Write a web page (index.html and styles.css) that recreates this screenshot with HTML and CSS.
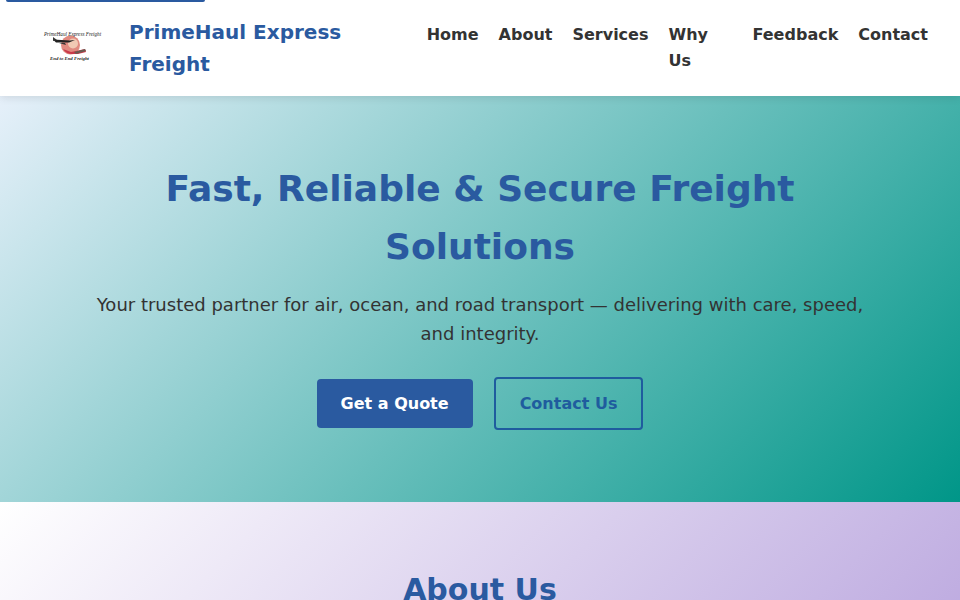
FILE: index.html
```html
<!DOCTYPE html>
<html lang="en">
<head>
<meta charset="utf-8">
<title>PrimeHaul Express Freight</title>
<link rel="stylesheet" href="styles.css">
</head>
<body>
<a class="skip-link" href="#main" aria-label="Skip to content"></a>
<header class="site-header">
  <div class="brand">
    <svg class="logo" viewBox="0 0 70 46" width="70" height="46" aria-hidden="true">
      <circle cx="33.500" cy="20" r="9.500" fill="#e08a80"/>
      <circle cx="36" cy="18.500" r="5" fill="#f1c9b4"/>
      <path d="M26 24q3 5 9 5l6 0 8-2-1-3-9 2-5 1z" fill="#c9394a"/>
      <path d="M37 27l11-3 1 2-10 3z" fill="#6b5a50"/>
      <path d="M16 14.500l17 1 5-.5-6 2.500-13 0z" fill="#222"/>
      <path d="M16 12l4 3-4 1z" fill="#333"/>
      <path d="M22 18l6 0 1 2z" fill="#333"/>
      <text class="logo-text" x="35.500" y="10.500" text-anchor="middle">PrimeHaul Express Freight</text>
      <text class="logo-text logo-sub" x="32.500" y="35" text-anchor="middle">End to End Freight</text>
    </svg>
    <span class="brand-name">PrimeHaul Express Freight</span>
  </div>
  <nav class="nav">
    <a href="#">Home</a>
    <a href="#">About</a>
    <a href="#">Services</a>
    <a class="nav-wrap" href="#">Why Us</a>
    <a href="#">Feedback</a>
    <a href="#">Contact</a>
  </nav>
</header>
<main id="main">
  <section class="hero">
    <h1>Fast, Reliable &amp; Secure Freight Solutions</h1>
    <p>Your trusted partner for air, ocean, and road transport — delivering with care, speed, and integrity.</p>
    <div class="actions">
      <a class="btn btn-solid" href="#">Get a Quote</a>
      <a class="btn btn-outline" href="#">Contact Us</a>
    </div>
  </section>
  <section class="about">
    <h2>About Us</h2>
  </section>
</main>
</body>
</html>
```
FILE: styles.css
```css
* { box-sizing: border-box; }
html, body { margin: 0; padding: 0; height: 100%; overflow: hidden; }
body {
  font-family: "DejaVu Sans", sans-serif;
  color: #333;
  background: #fff;
}
a { text-decoration: none; }
.skip-link {
  position: absolute;
  top: 0;
  left: 6px;
  width: 199px;
  height: 2px;
  background: #2a5aa0;
  border-radius: 0 0 4px 4px;
  z-index: 5;
}
.site-header {
  position: relative;
  z-index: 2;
  height: 96px;
  display: flex;
  align-items: center;
  justify-content: space-between;
  padding: 0 32px 0 37px;
  background: #fff;
  box-shadow: 0 2px 8px rgba(0, 0, 0, 0.1);
}
.brand { display: flex; align-items: center; gap: 22px; width: 320px; }
.logo { flex: none; }
.logo-text { font-family: "Liberation Serif", serif; font-size: 5.200px; fill: #222; font-style: italic; }
.logo-sub { font-size: 4.800px; font-weight: 700; }
.brand-name {
  width: 240px;
  font-size: 20px;
  line-height: 32px;
  font-weight: 700;
  color: #2a5aa0;
}
.nav { display: flex; align-items: flex-start; gap: 20px; font-size: 16px; line-height: 26px; font-weight: 700; }
.nav a { color: #333; }
.nav .nav-wrap { width: 64px; }
.hero {
  height: 406px;
  padding: 64px 80px 0;
  text-align: center;
  background: linear-gradient(135deg, #e6f0fa 0%, #009688 100%);
}
.hero h1 {
  margin: 0 auto;
  max-width: 680px;
  font-size: 36px;
  line-height: 58px;
  font-weight: 700;
  color: #2a5aa0;
}
.hero p {
  margin: 14px auto 0;
  max-width: 780px;
  font-size: 18px;
  line-height: 29px;
  color: #333;
}
.actions { display: flex; justify-content: center; align-items: center; gap: 21px; margin-top: 29px; }
.btn {
  display: block;
  padding: 0 24px;
  font-size: 16px;
  line-height: 49px;
  font-weight: 700;
  border-radius: 4px;
}
.btn-solid { background: #2a5aa0; color: #fff; }
.btn-outline { border: 2px solid #1f5c9e; color: #1f5c9e; }
.about {
  height: 98px;
  padding-top: 70px;
  overflow: hidden;
  text-align: center;
  background: linear-gradient(135deg, #fff 0%, #b39ddb 100%) no-repeat 0 0 / 100% 300px;
}
.about h2 {
  margin: 0;
  font-size: 30px;
  line-height: 36px;
  font-weight: 700;
  color: #2a5aa0;
}
```
